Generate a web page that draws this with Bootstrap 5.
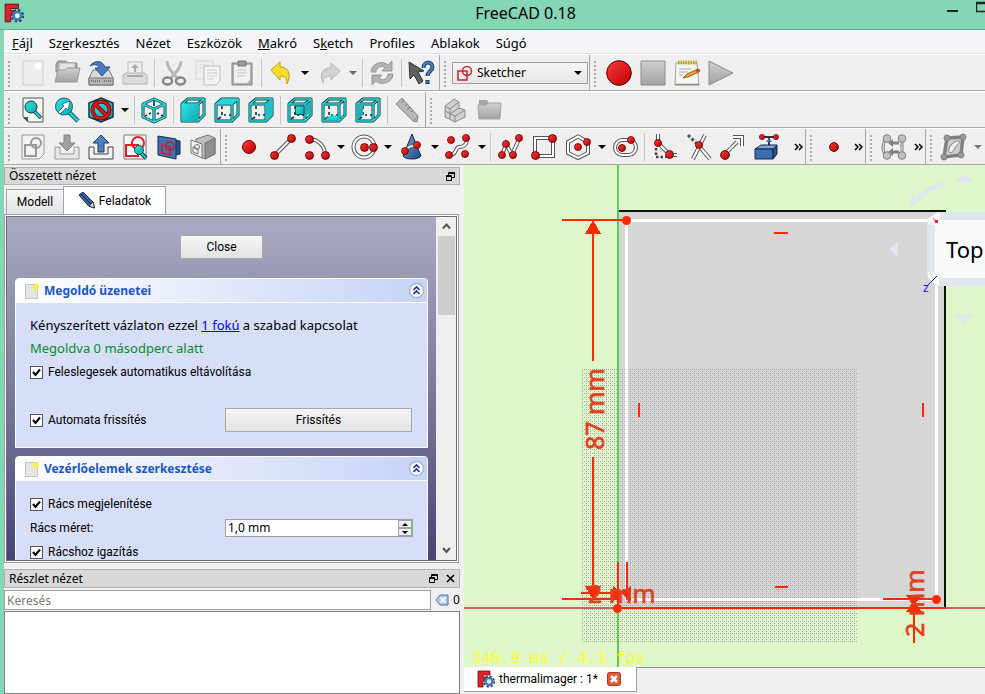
<!DOCTYPE html>
<html lang="hu">
<head>
<meta charset="utf-8">
<meta name="viewport" content="width=device-width, initial-scale=1">
<title>FreeCAD 0.18</title>
<link href="https://cdn.jsdelivr.net/npm/bootstrap@5.3.0/dist/css/bootstrap.min.css" rel="stylesheet">
<style>
  body{background:#84d7b4;color:#000;font:12px/16px "Noto Sans","Open Sans",sans-serif;height:100vh}
  button,input,select{font:inherit;color:inherit}
  .titlebar{height:30px;border-bottom:1px solid #5fb38f}
  .titlebar h1{font-size:16px;line-height:20px;padding-left:80px}
  .win-btn{background:none;border:0;padding:0;line-height:0}
  .shell{margin-left:4px;background:#f0f0f0;min-height:0}
  .menubar{background:#f4f5f8;height:24px;border-bottom:1px solid #e0e0e0;gap:16px;padding:2px 8px 0;font-size:13px}
  .menubar a{color:#000;text-decoration:none}
  .tool-row{height:37px;border-bottom:1px solid #a8a8a8;border-top:1px solid #fff;background:#efefef}
  .tool-group{border-right:1px solid #a8a8a8;padding-right:1px}
  .tool-row.dense .tool-group{padding-right:0}
  .tool-group:last-child{border-right:0}
  .grip{width:12px;flex:none}
  .grip::before{content:"";display:block;width:2px;height:28px;margin:4px 0 0 4px;background:repeating-linear-gradient(#aaa 0 2px,transparent 2px 4px)}
  .dense .grip{width:11px}
  .dense .tool-group:first-child .grip{width:12px}
  .tool{width:34px;height:34px;padding:0;border:0;background:none;flex:none;line-height:0}
  .tool svg{width:26px;height:26px;overflow:visible}
  .drop{width:14px;height:34px;padding:0;border:0;background:none;flex:none;line-height:0}
  .dense .drop{width:13px}
  .dense .more{width:14px}
  .rule{width:1px;height:28px;margin:4px 2px;background:#c4c4c4;flex:none}
  .combo-wrap{width:136px;height:22px;border:1px solid #a0a0a0;background:linear-gradient(#f6f6f6,#e6e6e6);flex:none;padding:0 5px 0 4px}
  .combo-wrap select{appearance:none;border:0;background:none;padding:0 0 0 4px;outline:0}
  .dock{width:457px;flex:none;padding-top:2px}
  .dock-title{height:18px;background:#d8d8d8;border:1px solid #b0b0b0;padding:0 4px;margin-right:1px}
  .dock-title h2{font-size:12px;line-height:16px;margin:0;font-weight:400}
  .dock-title button{background:none;border:0;padding:0;line-height:0}
  .dock-title.lower{height:19px;margin-top:6px}
  .tabs,.tasks,.doc-tab{font-family:Roboto,"Noto Sans",sans-serif}
  .tabs{height:29px;padding-left:2px}
  .tabs button{border:1px solid #a5a5a5;border-bottom:0;background:linear-gradient(#f4f4f4,#e4e4e4);padding:0}
  .tabs .idle{width:58px;height:25px}
  .tabs .live{width:103px;height:28px;background:#fff;margin-left:-1px}
  .frame{border:1px solid #a0a0a0;padding:1px;background:#fff;height:349px;margin-right:2px}
  .scroller{border:1px solid #6d6d80;overflow:hidden;background:linear-gradient(#abaac3,#9897b2 20%,#68668f 70%,#484474)}
  .tasks{padding:18px 8px 0;overflow:hidden}
  .push{border:1px solid #a8a8a8;background:linear-gradient(#f5f5f5,#e3e3e3);padding:0;height:24px;width:83px}
  .push.wide{width:187px}
  .task{border:1px solid #fff;border-radius:4px 4px 0 0;background:#d6def8;margin-top:19px}
  .task + .task{margin-top:8px}
  .task-head{height:24px;border-bottom:1px solid #fff;background:linear-gradient(90deg,#fff,#c6d3f7);border-radius:3px 3px 0 0;padding:0 2px 0 9px}
  .task-head h3{font:700 12px/16px "Noto Sans",sans-serif;color:#1a56c6;margin:0 0 0 5px}
  .task-head button{background:none;border:0;padding:0;line-height:0}
  .task-body{padding:11px 14px 0}
  .task-body .line{height:24px}
  .solver{height:144px}
  .solver .refresh{margin-top:23px;height:26px;margin-right:1px}
  .controls{height:100px}
  .box{appearance:none;width:13px;height:13px;margin:0 5px 0 0;border:1px solid #555;background:#fff url("data:image/svg+xml,%3Csvg xmlns='http://www.w3.org/2000/svg' viewBox='0 0 11 11'%3E%3Cpath d='M2 5l2.5 3L9 2.5' fill='none' stroke='%23000' stroke-width='2'/%3E%3C/svg%3E") center/11px}
  .say{font:13px/23px "Noto Sans",sans-serif}
  .done{color:#0a8a2a}
  .dof{color:#00f}
  .spin{width:188px;height:18px;border:1px solid #a0a0a0;background:#fff}
  .spin input{border:0;outline:0;padding:0 2px;width:100%;min-width:0;background:none;font-family:"Noto Sans",sans-serif}
  .spin button{width:14px;height:8px;border:1px solid #a5a5a5;background:#eee;padding:0;line-height:0;display:block}
  .bar{width:20px;background:#efefef;flex:none}
  .bar button{border:0;background:none;padding:0;line-height:0;height:19px}
  .thumb{width:17px;height:79px;background:#cdcdcd}
  .find{padding:2px 0 1px}
  .find input{border:1px solid #a0a0a0;height:20px;width:427px;padding:0 2px;outline:0}
  .find input::placeholder{color:#777}
  .result{border:1px solid #808088;background:#fff;margin-right:1px}
  .view{min-width:0;padding-left:3px}
  .dim text{font:25px "Noto Sans",sans-serif;fill:#e0401e;stroke:#e0401e;stroke-width:.6}
  .fps{font:16px "Liberation Mono",monospace;fill:#ffff20}
  .cube{font:22px "Noto Sans",sans-serif}
  .axis{font:12px "Noto Sans",sans-serif;fill:#1515e0}
  .doc-tabs{height:27px;border-top:1px solid #909090;background:#efefef}
  .doc-tab{width:173px;height:25px;background:#fff;border:1px solid #a0a0a0;border-width:0 1px 1px 0;margin-top:-1px;padding:0 15px 0 13px}
  .doc-tab button{border:0;background:none;padding:0;line-height:0}
</style>
</head>
<body class="d-flex flex-column overflow-hidden">

<svg width="0" height="0" class="position-absolute" aria-hidden="true">
  <defs>
    <linearGradient id="gRed" x1="0" y1="0" x2="1" y2="1"><stop offset="0" stop-color="#ff3b3b"/><stop offset="1" stop-color="#b80000"/></linearGradient>
    <linearGradient id="gBlue" x1="0" y1="0" x2="1" y2="1"><stop offset="0" stop-color="#7ba3d4"/><stop offset="1" stop-color="#20477f"/></linearGradient>
    <linearGradient id="gGrey" x1="0" y1="0" x2="0" y2="1"><stop offset="0" stop-color="#d0d0d0"/><stop offset="1" stop-color="#a2a2a2"/></linearGradient>
    <linearGradient id="gTeal" x1="0" y1="0" x2="1" y2="1"><stop offset="0" stop-color="#2ee6e6"/><stop offset="1" stop-color="#12a5ad"/></linearGradient>
    <symbol id="dot" viewBox="0 0 8 8"><circle cx="4" cy="4" r="3.500" fill="url(#gRed)" stroke="#5a0000" stroke-width=".8"/></symbol>
    <symbol id="logo" viewBox="0 0 18 18"><path d="M1 1h12v4H6v2h4v4H6v6H1z" fill="#e0202a" stroke="#5b1014" stroke-width=".8"/><circle cx="12" cy="11.500" r="4.800" fill="none" stroke="#27406f" stroke-width="2.600" stroke-dasharray="2 1.770"/><circle cx="12" cy="11.500" r="3.400" fill="#dff" stroke="#4a78bd" stroke-width="2.400"/></symbol>
    <symbol id="tri" viewBox="0 0 8 4"><path d="M0 0h8L4 4z"/></symbol>
    <symbol id="sheet" viewBox="0 0 14 16"><rect x=".5" y="1.500" width="12" height="14" fill="#e6e6e2" stroke="#c4c4c0"/><circle cx="11" cy="4" r="3" fill="#fff04a"/></symbol>
    <symbol id="fold" viewBox="0 0 17 17"><circle cx="8.500" cy="8.500" r="7" fill="#fff" stroke="#a9b3cf" stroke-width="1.400"/><path d="M5.500 8l3-3 3 3M5.500 12l3-3 3 3" fill="none" stroke="#17329b" stroke-width="1.600"/></symbol>
    <symbol id="openframe" viewBox="0 0 26 26">
      <g fill="none" stroke-linejoin="round"><path d="M8 9v3M8 15v3M10 18h2M15 18h2M4 22l3-2" stroke="#06383c" stroke-width="1.600"/><path d="M2 7h16v17H2zM2 7l6-5h16v16l-6 6M24 2l-6 5" stroke="#06383c" stroke-width="3"/><path d="M2 7h16v17H2zM2 7l6-5h16v16l-6 6M24 2l-6 5" stroke="#27d8dc" stroke-width="1.500"/></g>
    </symbol>
  </defs>
</svg>

<header class="titlebar d-flex align-items-center justify-content-between flex-shrink-0 ps-1">
  <svg width="20" height="20" class="mb-1"><use href="#logo"/></svg>
  <h1 class="mb-1 fw-normal">FreeCAD 0.18</h1>
  <div class="d-flex align-self-start">
    <button class="win-btn me-3" aria-label="Kis méret"><svg width="13" height="16"><path d="M0 10h11v2H0z" fill="#222"/></svg></button>
    <button class="win-btn" aria-label="Teljes méret"><svg width="9" height="16"><path d="M10 2.500H.500v9H10M0 3.500h9" fill="none" stroke="#222" stroke-width="1.500"/></svg></button>
  </div>
</header>

<div class="shell d-flex flex-column flex-grow-1">
  <nav class="menubar d-flex align-items-center flex-shrink-0" aria-label="Menü">
    <a href="#"><u>F</u>ájl</a><a href="#">Sz<u>e</u>rkesztés</a><a href="#">Nézet</a><a href="#">Eszközök</a><a href="#"><u>M</u>akró</a><a href="#">S<u>k</u>etch</a><a href="#">Profiles</a><a href="#">Ablakok</a><a href="#">Súgó</a>
  </nav>

  <div class="tool-row d-flex overflow-hidden flex-shrink-0">
    <div class="tool-group d-flex align-items-center">
      <span class="grip"></span>
      <button class="tool" aria-label="Új"><svg viewBox="0 0 26 26"><rect x="3" y="1" width="20" height="24" fill="#ececec" stroke="#cfcfcf"/><circle cx="18" cy="6" r="3.500" fill="#fff"/></svg></button>
      <button class="tool" aria-label="Megnyitás"><svg viewBox="0 0 26 26"><path d="M2 4l2-3h8l2 2h9v9H2z" fill="#a8a8a8" stroke="#8d8d8d"/><path d="M5 3h16v8H5z" fill="#e4e4e4" stroke="#aaa"/><path d="M1 22L4 10h7l2-2h13l-3 14z" fill="url(#gGrey)" stroke="#999"/></svg></button>
      <button class="tool" aria-label="Mentés"><svg viewBox="0 0 26 26"><path d="M5 10h16l4 8v7H1v-7z" fill="#d9d9d9" stroke="#777"/><path d="M1 18h24v7H1z" fill="#b5b5b5" stroke="#777"/><path d="M3 21h10M16 21h7" stroke="#777" stroke-width="2" stroke-dasharray="1 1"/><path d="M2 6C5 1 14-1 17 7h5l-8 9-7-8h4C10 4 6 4 2 6z" fill="#4a7cc0" stroke="#244c86"/></svg></button>
      <button class="tool" aria-label="Nyomtatás"><svg viewBox="0 0 26 26"><path d="M6 2h14v13H6z" fill="#eee" stroke="#bbb"/><path d="M13 4l4 4h-3v4h-2V8H9z" fill="#aaa"/><path d="M1 15l3-2h18l3 2v9H1z" fill="#dcdcdc" stroke="#b4b4b4"/><path d="M5 16h16" stroke="#aaa" stroke-width="2"/></svg></button>
      <span class="rule"></span>
      <button class="tool" aria-label="Kivágás"><svg viewBox="0 0 26 26"><path d="M6 1c0 6 4 10 10 17M20 1c0 6-4 10-10 17" fill="none" stroke="#b8b8b8" stroke-width="3"/><ellipse cx="6.500" cy="21" rx="4.500" ry="3.500" fill="none" stroke="#888" stroke-width="2.500"/><ellipse cx="19.500" cy="21" rx="4.500" ry="3.500" fill="none" stroke="#888" stroke-width="2.500"/></svg></button>
      <button class="tool" aria-label="Másolás"><svg viewBox="0 0 26 26"><path d="M1 1h17v18H1z" fill="#eee" stroke="#d2d2d2"/><path d="M4 5h10M4 8h6" stroke="#d8d8d8"/><path d="M9 6h16v15l-4 4H9z" fill="#f3f3f3" stroke="#bdbdbd"/><path d="M12 10h10M12 13h10M12 16h10M12 19h6" stroke="#ccc"/></svg></button>
      <button class="tool" aria-label="Beillesztés"><svg viewBox="0 0 26 26"><path d="M3 3h20v22H3z" fill="#b0b0b0" stroke="#858585"/><path d="M5 5h16v15l-3 3H5z" fill="#f0f0f0"/><path d="M9 1h8v5H9z" fill="#999" stroke="#777"/><path d="M8 10h10M8 13h10M8 16h8" stroke="#c4c4c4"/></svg></button>
      <span class="rule"></span>
      <button class="tool" aria-label="Visszavonás"><svg viewBox="0 0 26 26"><path d="M3 10l9-8v5c8 0 12 6 7 17 0-6-2-8-7-8v4z" fill="#f5dd2e" stroke="#c2a000" stroke-linejoin="round"/></svg></button>
      <button class="drop" aria-label="Visszavonási lista"><svg width="8" height="4"><use href="#tri"/></svg></button>
      <button class="tool" aria-label="Újra"><svg viewBox="0 0 26 26"><path d="M24 11l-9-8v5C7 8 3 13 7 23c0-5 3-7 8-7v4z" fill="#d2d2d2" stroke="#b4b4b4" stroke-linejoin="round"/></svg></button>
      <button class="drop" aria-label="Újra lista"><svg width="8" height="4" fill="#666"><use href="#tri"/></svg></button>
      <span class="rule"></span>
      <button class="tool" aria-label="Frissítés nézet"><svg viewBox="0 0 26 26"><path d="M2 12C2 3 14 0 19 5l4-4v10H13l3-3C12 4 7 8 7 12zM24 14c0 9-12 12-17 7l-4 4V15h10l-3 3c4 4 9 0 9-4z" fill="#b4b4b4" stroke="#8b8b8b" stroke-width=".8"/></svg></button>
      <span class="rule"></span>
      <button class="tool" aria-label="Mi ez?"><svg viewBox="0 0 26 26"><path d="M1 2l15 9-6 1 5 9-4 3-5-9-4 4z" fill="#5d615c" stroke="#333"/><path d="M15.500 8c0-7 9-7 9-1 0 4-5 4-5 9M19.500 20v4" fill="none" stroke="#173a6c" stroke-width="4"/><path d="M15.500 8c0-7 9-7 9-1 0 4-5 4-5 9M19.500 21v2" fill="none" stroke="#4d82c6" stroke-width="2"/></svg></button>
    </div>
    <div class="tool-group d-flex align-items-center">
      <span class="grip"></span>
      <div class="combo-wrap d-flex align-items-center">
        <svg width="16" height="16" class="flex-shrink-0" fill="none" stroke="#d4202c" stroke-width="1.500"><path d="M1 6h9v9H1z"/><circle cx="10" cy="6" r="4.500"/></svg>
        <select class="flex-grow-1" aria-label="Munkafelület"><option>Sketcher</option></select>
        <svg width="8" height="4" class="flex-shrink-0"><use href="#tri"/></svg>
      </div>
    </div>
    <div class="tool-group d-flex align-items-center">
      <span class="grip"></span>
      <button class="tool" aria-label="Makró rögzítése"><svg viewBox="0 0 26 26"><circle cx="13" cy="13" r="12.300" fill="url(#gRed)" stroke="#4a0000"/></svg></button>
      <button class="tool" aria-label="Makró leállítása"><svg viewBox="0 0 26 26"><path d="M1 1h24v24H1z" fill="url(#gGrey)" stroke="#8c8c8c"/></svg></button>
      <button class="tool" aria-label="Makrók"><svg viewBox="0 0 26 26"><path d="M2 3h21l2 22H1z" fill="#f4f4f0" stroke="#a5a59c"/><path d="M1 24.500h24" stroke="#888" stroke-width="1.500"/><path d="M4 2.500h19" stroke="#b9a31a" stroke-width="4" stroke-dasharray="1.500 1"/><path d="M5 9h12M5 12h9M5 15h4" stroke="#aab"/><path d="M9 18l4-4 11-5 1 3-11 5z" fill="#e8a33a" stroke="#7d4e12" stroke-width=".8"/><circle cx="24" cy="10.500" r="2" fill="#e23a3a"/></svg></button>
      <button class="tool" aria-label="Makró futtatása"><svg viewBox="0 0 26 26"><path d="M1 1l24 12L1 25z" fill="url(#gGrey)" stroke="#8c8c8c"/></svg></button>
    </div>
  </div>

  <div class="tool-row d-flex overflow-hidden flex-shrink-0">
    <div class="tool-group d-flex align-items-center">
      <span class="grip"></span>
      <button class="tool" aria-label="Mindent illeszt"><svg viewBox="0 0 26 26"><path d="M3 1h20v24H8l-5-5z" fill="#f5f5f3" stroke="#555"/><path d="M3 20h5v5z" fill="#555"/><path d="M14 14l7 7" stroke="#06383c" stroke-width="3.500"/><path d="M14 14l7 7" stroke="#22ccd0" stroke-width="2"/><circle cx="11" cy="10" r="6" fill="url(#gTeal)" stroke="#06383c"/></svg></button>
      <button class="tool" aria-label="Kijelölés illesztése"><svg viewBox="0 0 26 26"><path d="M15 15l9 9" stroke="#06383c" stroke-width="4.500"/><path d="M15 15l9 9" stroke="#22ccd0" stroke-width="3"/><circle cx="10" cy="9.500" r="8.500" fill="url(#gTeal)" stroke="#0b6a70"/><path d="M4 15l6-6-2-2 8-3-2 9-2-2-6 6z" fill="#fff" stroke="#06383c" stroke-width=".6"/></svg></button>
      <button class="tool" aria-label="Rajzstílus"><svg viewBox="0 0 26 26"><path d="M13 1l12 5v14l-12 5-12-5V6z" fill="url(#gTeal)" stroke="#06383c" stroke-width="1.500"/><circle cx="13" cy="13" r="8.500" fill="none" stroke="#5a0000" stroke-width="4"/><path d="M7 7l12 12" stroke="#5a0000" stroke-width="4"/><circle cx="13" cy="13" r="8.500" fill="none" stroke="#d81818" stroke-width="2.600"/><path d="M7 7l12 12" stroke="#d81818" stroke-width="2.600"/></svg></button>
      <button class="drop" aria-label="Rajzstílus lista"><svg width="8" height="4"><use href="#tri"/></svg></button>
      <span class="rule"></span>
      <button class="tool" aria-label="Axonometrikus"><svg viewBox="0 0 26 26" fill="none" stroke-linejoin="round"><path d="M13 4v5M10 16l-2 1M6 18l-2 1M16 16l2 1M20 18l2 1" stroke="#06383c" stroke-width="1.600"/><path d="M13 2l11 5v13l-11 5-11-5V7zM2 7l11 5 11-5M13 12v13" stroke="#06383c" stroke-width="3"/><path d="M13 2l11 5v13l-11 5-11-5V7zM2 7l11 5 11-5M13 12v13" stroke="#27d8dc" stroke-width="1.500"/></svg></button>
      <span class="rule"></span>
      <button class="tool" aria-label="Elöl"><svg viewBox="0 0 26 26"><use href="#openframe"/><path d="M2 7h16v17H2z" fill="url(#gTeal)"/></svg></button>
      <button class="tool" aria-label="Felül"><svg viewBox="0 0 26 26"><use href="#openframe"/><path d="M2 7l6-5h16l-6 5z" fill="#25d5da"/></svg></button>
      <button class="tool" aria-label="Jobb"><svg viewBox="0 0 26 26"><use href="#openframe"/><path d="M18 7l6-5v16l-6 6z" fill="#1cc0c6"/></svg></button>
      <span class="rule"></span>
      <button class="tool" aria-label="Hátul"><svg viewBox="0 0 26 26"><use href="#openframe"/><path d="M8.500 9H17v8.500H8.500z" fill="url(#gTeal)" stroke="#06383c" stroke-width=".8"/><path d="M19.500 7.500L22.500 5v12l-3 1z" fill="#17b4ba"/></svg></button>
      <button class="tool" aria-label="Alul"><svg viewBox="0 0 26 26"><use href="#openframe"/><path d="M4 22.500l5-4h8v4zM19.500 18.500h2.500l-2.500 2.500z" fill="#25d5da"/></svg></button>
      <button class="tool" aria-label="Bal"><svg viewBox="0 0 26 26"><use href="#openframe"/><path d="M3.500 8.500H8V18l-4.500 4z" fill="#1cb4ba"/></svg></button>
      <span class="rule"></span>
      <button class="tool" aria-label="Távolságmérés"><svg viewBox="0 0 26 26"><path d="M2 7l6-6 16 18-1 6-4-1z" fill="#b6b6b6" stroke="#888"/><path d="M19 24l5-5" stroke="#888"/><path d="M10 3l-3 3M13 7l-2 2M16 10l-3 3M19 13l-2 2" stroke="#777"/></svg></button>
    </div>
    <div class="tool-group d-flex align-items-center">
      <span class="grip"></span>
      <button class="tool" aria-label="Alkatrész"><svg viewBox="0 0 26 26" fill="#cfcfcf" stroke="#8a8a8a" stroke-linejoin="round"><path d="M3 9l9-7 5 3v6l6 2v7l-10 5-10-5z"/><path d="M3 9l5 3 9-7M8 12v5l9-6M3 14l10 5 10-6M13 19v6M8 17v5"/></svg></button>
      <button class="tool" aria-label="Csoport"><svg viewBox="0 0 26 26"><path d="M3 3h8l2 3h11v5H3z" fill="#a5a5a5"/><path d="M2 8h8l2-2h13l-1 16H3z" fill="url(#gGrey)" stroke="#a5a5a5"/></svg></button>
    </div>
  </div>

  <div class="tool-row dense d-flex overflow-hidden flex-shrink-0">
    <div class="tool-group d-flex align-items-center">
      <span class="grip"></span>
      <button class="tool" aria-label="Új vázlat"><svg viewBox="0 0 26 26" fill="none" stroke="#999"><path d="M2 1h22v19l-5 5H2z" fill="#f2f2f2"/><path d="M5 11h11v11H5z" stroke-width="2"/><circle cx="16" cy="9" r="5" stroke-width="2"/></svg></button>
      <button class="tool" aria-label="Vázlat elhagyása"><svg viewBox="0 0 26 26"><path d="M1 13h5v7h14v-7h5v12H1z" fill="#e6e6e6" stroke="#999"/><path d="M10 1h6v8h5l-8 8-8-8h5z" fill="#a0a0a0" stroke="#858585"/></svg></button>
      <button class="tool" aria-label="Vázlat csatolása"><svg viewBox="0 0 26 26"><path d="M1 13h5v7h14v-7h5v12H1z" fill="#f4f4f4" stroke="#444"/><path d="M10 18h6V9h5l-8-8-8 8h5z" fill="#4f80bd" stroke="#1d3c6c"/></svg></button>
      <button class="tool" aria-label="Vázlat nézet"><svg viewBox="0 0 26 26" fill="none"><path d="M2 1h22v24H2z" fill="#f8f8f8" stroke="#777"/><path d="M4 11h12v11H4z" stroke="#e02020" stroke-width="2"/><circle cx="16" cy="9" r="6" stroke="#e02020" stroke-width="2"/><path d="M18 18l6 6" stroke="#06383c" stroke-width="4"/><path d="M18 18l6 6" stroke="#22ccd0" stroke-width="2"/><circle cx="17" cy="16" r="4.500" fill="url(#gTeal)" stroke="#06383c" stroke-width=".8"/></svg></button>
      <button class="tool" aria-label="Metszet nézet"><svg viewBox="0 0 26 26"><path d="M16 6l8 1v13l-8 2z" fill="#2d5695" stroke="#14294f"/><path d="M2 2l18 3v20L2 21z" fill="#4470b0" stroke="#14294f"/><path d="M6 11l8 2v8l-8-2z" fill="none" stroke="#c81e2c" stroke-width="1.600"/><circle cx="14" cy="12" r="4" fill="none" stroke="#c81e2c" stroke-width="1.600"/></svg></button>
      <button class="tool" aria-label="Vázlat leképezése"><svg viewBox="0 0 26 26" stroke="#777" stroke-linejoin="round"><path d="M6 5l12-4 7 3v16l-10 5-9-4z" fill="#bdbdbd"/><path d="M15 9l10-5v16l-10 5z" fill="#8f8f8f"/><path d="M1 6l11 4v14L1 19z" fill="#efefef"/><path d="M3 13l5 2v5l-5-2z" fill="none"/><circle cx="7" cy="13" r="2.500" fill="none"/></svg></button>
    </div>
    <div class="tool-group d-flex align-items-center">
      <span class="grip"></span>
      <button class="tool" aria-label="Pont"><svg viewBox="0 0 26 26"><circle cx="13" cy="13" r="6.500" fill="url(#gRed)" stroke="#7a0000"/></svg></button>
      <button class="tool" aria-label="Vonal"><svg viewBox="0 0 26 26"><path d="M5 21L21 5" stroke="#555" stroke-width="4"/><path d="M5 21L21 5" stroke="#fff" stroke-width="2"/><use href="#dot" x="0" y="17" width="9" height="9"/><use href="#dot" x="17" y="0" width="9" height="9"/></svg></button>
      <button class="tool" aria-label="Ív"><svg viewBox="0 0 26 26" fill="none"><path d="M5 5c9 0 16 7 16 16" stroke="#555" stroke-width="4"/><path d="M5 5c9 0 16 7 16 16" stroke="#fff" stroke-width="2"/><use href="#dot" x="1" y="1" width="9" height="9"/><use href="#dot" x="1" y="17" width="9" height="9"/><use href="#dot" x="17" y="17" width="9" height="9"/></svg></button>
      <button class="drop" aria-label="Ív lista"><svg width="8" height="4"><use href="#tri"/></svg></button>
      <button class="tool" aria-label="Kör"><svg viewBox="0 0 26 26" fill="none"><circle cx="13" cy="13" r="10.500" stroke="#555" stroke-width="4"/><circle cx="13" cy="13" r="10.500" stroke="#fff" stroke-width="2"/><use href="#dot" x="9" y="9" width="9" height="9"/><use href="#dot" x="18" y="9" width="9" height="9"/></svg></button>
      <button class="drop" aria-label="Kör lista"><svg width="8" height="4"><use href="#tri"/></svg></button>
      <button class="tool" aria-label="Kúpszelet"><svg viewBox="0 0 26 26"><path d="M14 0l9 22c-2 4-16 4-18 0z" fill="url(#gBlue)" stroke="#14294f"/><path d="M7 17c2-5 7-5 11-6" fill="none" stroke="#fff" stroke-width="1.500"/><use href="#dot" x="3" y="13" width="8" height="8"/><use href="#dot" x="15" y="7" width="8" height="8"/></svg></button>
      <button class="drop" aria-label="Kúpszelet lista"><svg width="8" height="4"><use href="#tri"/></svg></button>
      <button class="tool" aria-label="B-görbe"><svg viewBox="0 0 26 26" fill="none"><path d="M5 21c7 0 5-8 9-8s8-2 8-8" stroke="#555" stroke-width="4"/><path d="M5 21c7 0 5-8 9-8s8-2 8-8" stroke="#fff" stroke-width="2"/><use href="#dot" x="2" y="2" width="8" height="8"/><use href="#dot" x="17" y="0" width="8" height="8"/><use href="#dot" x="0" y="17" width="8" height="8"/><use href="#dot" x="16" y="16" width="8" height="8"/></svg></button>
      <button class="drop" aria-label="B-görbe lista"><svg width="8" height="4"><use href="#tri"/></svg></button>
      <span class="rule"></span>
      <button class="tool" aria-label="Vonallánc"><svg viewBox="0 0 26 26" fill="none"><path d="M5 21l4-11 6 11 7-16" stroke="#555" stroke-width="4"/><path d="M5 21l4-11 6 11 7-16" stroke="#fff" stroke-width="2"/><use href="#dot" x="1" y="17" width="8" height="8"/><use href="#dot" x="5" y="6" width="8" height="8"/><use href="#dot" x="12" y="17" width="8" height="8"/><use href="#dot" x="18" y="0" width="8" height="8"/></svg></button>
      <button class="tool" aria-label="Téglalap"><svg viewBox="0 0 26 26" fill="none"><path d="M4 4h18v18H4z" stroke="#555" stroke-width="4"/><path d="M4 4h18v18H4z" stroke="#fff" stroke-width="2"/><use href="#dot" x="0" y="17" width="9" height="9"/><use href="#dot" x="17" y="0" width="9" height="9"/></svg></button>
      <button class="tool" aria-label="Sokszög"><svg viewBox="0 0 26 26" fill="none"><path d="M13 2.500l10 5.500v11l-10 5-10-5V8z" stroke="#555" stroke-width="4"/><path d="M13 2.500l10 5.500v11l-10 5-10-5V8z" stroke="#fff" stroke-width="2"/><use href="#dot" x="9" y="9" width="8" height="8"/><use href="#dot" x="18" y="4" width="8" height="8"/></svg></button>
      <button class="drop" aria-label="Sokszög lista"><svg width="8" height="4"><use href="#tri"/></svg></button>
      <button class="tool" aria-label="Horony"><svg viewBox="0 0 26 26" fill="none"><rect x="3" y="6" width="21" height="15" rx="7.500" stroke="#555" stroke-width="4"/><rect x="3" y="6" width="21" height="15" rx="7.500" stroke="#fff" stroke-width="2"/><use href="#dot" x="6" y="10" width="8" height="8"/><use href="#dot" x="15" y="2" width="8" height="8"/></svg></button>
      <span class="rule"></span>
      <button class="tool" aria-label="Lekerekítés"><svg viewBox="0 0 26 26" fill="none"><path d="M7 0v9l12 12h7" stroke="#555" stroke-width="4"/><path d="M7 0v9l12 12h7" stroke="#fff" stroke-width="2"/><path d="M5 14v9h10" stroke="#444" stroke-width="2.500" stroke-dasharray="2.500 2"/><use href="#dot" x="3" y="5" width="8" height="8"/><use href="#dot" x="14" y="16" width="9" height="9"/></svg></button>
      <button class="tool" aria-label="Él levágása"><svg viewBox="0 0 26 26" fill="none"><path d="M20 1L8 25M13 11l12 14" stroke="#555" stroke-width="4"/><path d="M20 1L8 25M13 11l12 14" stroke="#fff" stroke-width="2"/><path d="M3 1l9 9" stroke="#555" stroke-width="3" stroke-dasharray="3 2"/><use href="#dot" x="10" y="7" width="8" height="8"/></svg></button>
      <button class="tool" aria-label="Él hosszabbítása"><svg viewBox="0 0 26 26" fill="none"><path d="M6 20l12-12" stroke="#555" stroke-width="4" stroke-dasharray="8 1"/><path d="M6 20l12-12" stroke="#fff" stroke-width="2" stroke-dasharray="8 1"/><path d="M14 3h9v9" stroke="#555" stroke-width="4"/><path d="M14 3h9v9" stroke="#fff" stroke-width="2"/><use href="#dot" x="1" y="16" width="10" height="10"/></svg></button>
      <button class="tool" aria-label="Külső geometria"><svg viewBox="0 0 26 26"><path d="M2 15l6-4h16l-4 4z" fill="#7ea6d8" stroke="#14294f"/><path d="M2 15h18v10H2z" fill="#3d6eb0" stroke="#14294f"/><path d="M20 15l4-4v9l-4 5z" fill="#285089" stroke="#14294f"/><path d="M16 11V4M8 3h16" stroke="#333" stroke-width="2"/><path d="M13 8l3-4 3 4z" fill="#3d6eb0"/><use href="#dot" x="6" y="0" width="6" height="6"/><use href="#dot" x="20" y="0" width="6" height="6"/></svg></button>
      <button class="drop more ms-2" aria-label="Több geometria"><svg width="9" height="8" fill="none" stroke="#000" stroke-width="1.500"><path d="M1 1l3 3-3 3M5 1l3 3-3 3"/></svg></button>
    </div>
    <div class="tool-group d-flex align-items-center">
      <span class="grip"></span>
      <button class="tool" aria-label="Egybeesés"><svg viewBox="0 0 26 26"><use href="#dot" x="8" y="8" width="10" height="10"/></svg></button>
      <button class="drop more" aria-label="Több kényszer"><svg width="9" height="8" fill="none" stroke="#000" stroke-width="1.500"><path d="M1 1l3 3-3 3M5 1l3 3-3 3"/></svg></button>
    </div>
    <div class="tool-group d-flex align-items-center">
      <span class="grip"></span>
      <button class="tool" aria-label="Vázlat eszközök"><svg viewBox="0 0 26 26" fill="none" stroke="#808080"><path d="M5 5c-4 5-4 12 0 17M21 5v17" stroke-width="3"/><path d="M5 5c-4 5-4 12 0 17M21 5v17" stroke="#eee"/><path d="M9 9h9M9 18h9" stroke-width="3"/><path d="M12 5l-5 4 5 4zM12 14l-5 4 5 4z" fill="#808080" stroke="none"/><g fill="#c0c0c0"><circle cx="6" cy="4.500" r="3.800"/><circle cx="21" cy="4.500" r="3.800"/><circle cx="6" cy="21.500" r="3.800"/><circle cx="21" cy="21.500" r="3.800"/></g></svg></button>
      <button class="drop more" aria-label="Több eszköz"><svg width="9" height="8" fill="none" stroke="#000" stroke-width="1.500"><path d="M1 1l3 3-3 3M5 1l3 3-3 3"/></svg></button>
    </div>
    <div class="tool-group d-flex align-items-center">
      <span class="grip"></span>
      <button class="tool" aria-label="B-görbe eszközök"><svg viewBox="0 0 26 26" fill="none" stroke="#808080"><path d="M6 4l16-1-2 18-17 2z" stroke-width="3.500" fill="#ccc"/><path d="M8 18c-2-5 6-12 10-11 3 1-3 4-4 7s-4 6-6 4z" fill="#eee"/><g fill="#999"><circle cx="6" cy="4" r="3"/><circle cx="22" cy="3" r="3"/><circle cx="20" cy="21" r="3"/><circle cx="3" cy="23" r="3"/></g></svg></button>
      <button class="drop" aria-label="B-görbe eszköz lista"><svg width="8" height="4" fill="#777"><use href="#tri"/></svg></button>
    </div>
  </div>

  <main class="d-flex flex-grow-1 overflow-hidden">
    <section class="dock d-flex flex-column" aria-label="Panelek">
      <div class="dock-title d-flex align-items-center justify-content-between flex-shrink-0">
        <h2>Összetett nézet</h2>
        <button aria-label="Lebegtetés"><svg width="9" height="9" fill="none" stroke="#000"><path d="M2.500 3V.500h6v5H6M3 1.500h5M.500 3.500h5v5h-5zM1 4.500h4"/></svg></button>
      </div>
      <div class="tabs d-flex align-items-end flex-shrink-0" role="tablist">
        <button class="idle" role="tab">Modell</button>
        <button class="live d-flex align-items-center justify-content-center gap-1" role="tab" aria-selected="true"><svg width="17" height="17"><path d="M1 3l4-3 10 10 1.500 6-6-2z" fill="#35659f" stroke="#142c52"/><path d="M11 14l4-4 1.500 6z" fill="#ddd" stroke="#222" stroke-width=".8"/><path d="M3 2l10 10" stroke="#142c52"/></svg>Feladatok</button>
      </div>
      <div class="frame d-flex flex-shrink-0">
        <div class="scroller d-flex flex-grow-1">
          <div class="tasks flex-grow-1">
            <div class="text-center"><button class="push">Close</button></div>
            <section class="task">
              <div class="task-head d-flex align-items-center"><svg width="14" height="16"><use href="#sheet"/></svg><h3 class="flex-grow-1">Megoldó üzenetei</h3><button aria-label="Összecsukás"><svg width="17" height="17"><use href="#fold"/></svg></button></div>
              <div class="task-body solver">
                <div class="say">Kényszerített vázlaton ezzel <a href="#" class="dof">1 fokú</a> a szabad kapcsolat</div>
                <div class="say done">Megoldva 0 másodperc alatt</div>
                <div class="line d-flex align-items-center"><input class="box" type="checkbox" id="c1" checked><label for="c1">Feleslegesek automatikus eltávolítása</label></div>
                <div class="refresh d-flex align-items-center justify-content-between"><span class="d-flex align-items-center"><input class="box" type="checkbox" id="c2" checked><label for="c2">Automata frissítés</label></span><button class="push wide">Frissítés</button></div>
              </div>
            </section>
            <section class="task">
              <div class="task-head d-flex align-items-center"><svg width="14" height="16"><use href="#sheet"/></svg><h3 class="flex-grow-1">Vezérlőelemek szerkesztése</h3><button aria-label="Összecsukás"><svg width="17" height="17"><use href="#fold"/></svg></button></div>
              <div class="task-body controls">
                <div class="line d-flex align-items-center"><input class="box" type="checkbox" id="c3" checked><label for="c3">Rács megjelenítése</label></div>
                <div class="line d-flex align-items-center justify-content-between"><label for="g">Rács méret:</label>
                  <div class="spin d-flex align-items-center"><input id="g" type="text" value="1,0 mm"><div><button aria-label="Növelés"><svg width="6" height="3"><use href="#tri" transform="rotate(180 3 1.500)"/></svg></button><button aria-label="Csökkentés"><svg width="6" height="3"><use href="#tri"/></svg></button></div></div></div>
                <div class="line d-flex align-items-center"><input class="box" type="checkbox" id="c4" checked><label for="c4">Rácshoz igazítás</label></div>
              </div>
            </section>
          </div>
          <div class="bar d-flex flex-column align-items-center">
            <button aria-label="Fel"><svg width="9" height="7" fill="none" stroke="#555" stroke-width="2"><path d="M1 5.500l3.500-4 3.500 4"/></svg></button>
            <div class="thumb"></div>
            <button class="mt-auto" aria-label="Le"><svg width="9" height="7" fill="none" stroke="#555" stroke-width="2"><path d="M1 1l3.500 4L8 1"/></svg></button>
          </div>
        </div>
      </div>
      <div class="dock-title lower d-flex align-items-center flex-shrink-0">
        <h2 class="flex-grow-1">Részlet nézet</h2>
        <button class="me-2" aria-label="Részlet lebegtetése"><svg width="9" height="9" fill="none" stroke="#000"><path d="M2.500 3V.500h6v5H6M3 1.500h5M.500 3.500h5v5h-5zM1 4.500h4"/></svg></button>
        <button aria-label="Bezárás"><svg width="9" height="9" fill="none" stroke="#000" stroke-width="1.600"><path d="M1 1l7 7M8 1L1 8"/></svg></button>
      </div>
      <div class="find d-flex align-items-center flex-shrink-0">
        <input type="text" placeholder="Keresés" aria-label="Keresés">
        <svg width="14" height="12" class="ms-1 me-1"><path d="M5 1h8v10H5L1 6z" fill="#a9c9ea" stroke="#4b7db4"/><path d="M5.500 3.500l5 5M10.500 3.500l-5 5" stroke="#fff" stroke-width="1.800"/></svg><span>0</span>
      </div>
      <div class="result flex-grow-1"></div>
    </section>

    <section class="view d-flex flex-column flex-grow-1" aria-label="3D nézet">
      <svg class="flex-grow-1 w-100" height="100">
        <defs><pattern id="mesh" x="582" y="369" width="4" height="4" patternUnits="userSpaceOnUse"><path d="M0 0h1v1H0zM2 0h1v1H2zM0 2h1v1H0z" fill="#a6a6a6"/></pattern></defs>
        <rect width="100%" height="100%" fill="#dff6cb"/>
        <g transform="translate(-464 -165)" shape-rendering="crispEdges">
          <rect x="619" y="212" width="326" height="396" fill="#d6d6d6"/>
          <path d="M619 211h327M945 210v397" stroke="#111" stroke-width="2" fill="none"/>
          <rect x="582" y="369" width="276" height="274" fill="url(#mesh)"/>
          <path d="M464 608h2000" stroke="#c86464" stroke-width="2"/>
          <path d="M618 608h328" stroke="#ff2a00" stroke-width="2"/>
          <path d="M626.500 220.500h310v379h-310z" fill="none" stroke="#fff" stroke-width="3"/>
          <path d="M618 165v502" stroke="#5ecb5e" stroke-width="2"/>
          <g stroke="#ff2a00" stroke-width="2" fill="none">
            <path d="M562 220h64M593 225v136M593 457v135M562 599h56M581 593h40M618 562v46M627 562v38M883 599h53M914 600v43M774 233h14M775 587h13M639 403v14M923 403v14"/>
          </g>
          <g fill="#ff2a00">
            <path d="M593 220l8 14h-16zM593 600l8-14h-16zM906 595h16l-6 8 6 9h-16l6-9zM613 586l9 7-9 8zM631 586l-10 7 10 8z"/>
          </g>
        </g>
        <g transform="translate(-464 -165)">
          <g fill="#ff2a00"><circle cx="626.500" cy="220.500" r="4.500"/><circle cx="617.500" cy="608.500" r="4.500"/><circle cx="936.500" cy="599.500" r="4.500"/></g>
          <g class="dim">
            <text transform="translate(604 450) rotate(-90)">87 mm</text>
            <text x="588" y="603">2 mm</text>
            <text transform="translate(924 637) rotate(-90)">2 mm</text>
          </g>
          <text class="fps" x="472" y="663">245.9 ms / 4.1 fps</text>
          <g fill="#dfe6ee">
            <path d="M937 212h60v74h-60l-10-10v-54z"/>
            <path d="M964 174l9 8h-18zM964 323l9-8h-18zM889 249l9-8v16z"/>
          </g>
          <path d="M943 184c-10 3-19 9-26 16" fill="none" stroke="#dfe6ee" stroke-width="5"/>
          <path d="M910 207l2-13 8 8z" fill="#dfe6ee"/>
          <path d="M938 220h60v58h-60l-3-3v-52z" fill="#f8fafc"/>
          <path d="M928 219l8-6 4 1-1 7-4 4-7-1zM928 272l6 1 5 6v6l-5-2-6-6z" fill="#fff"/>
          <path d="M933 218l3 3" stroke="#f99" stroke-width="1.500"/><path d="M935 220h3v3h-3z" fill="#f22"/>
          <path d="M937 276l-10 10" stroke="#1515e0"/>
          <text class="cube" x="946" y="258">Top</text><text class="axis" x="923" y="292">z</text>
        </g>
      </svg>
      <div class="doc-tabs flex-shrink-0">
        <div class="doc-tab d-flex align-items-center"><svg width="18" height="18" class="me-1"><use href="#logo"/></svg><span class="flex-grow-1 text-nowrap">thermalimager : 1*</span><button aria-label="Bezárás fül"><svg width="14" height="14"><rect x=".500" y=".500" width="13" height="13" rx="2" fill="#dd5a3a" stroke="#b03a20"/><path d="M4 4l6 6M10 4l-6 6" stroke="#fff" stroke-width="2.500"/></svg></button></div>
      </div>
    </section>
  </main>
</div>
<script src="https://cdn.jsdelivr.net/npm/bootstrap@5.3.0/dist/js/bootstrap.bundle.min.js"></script>
</body>
</html>
